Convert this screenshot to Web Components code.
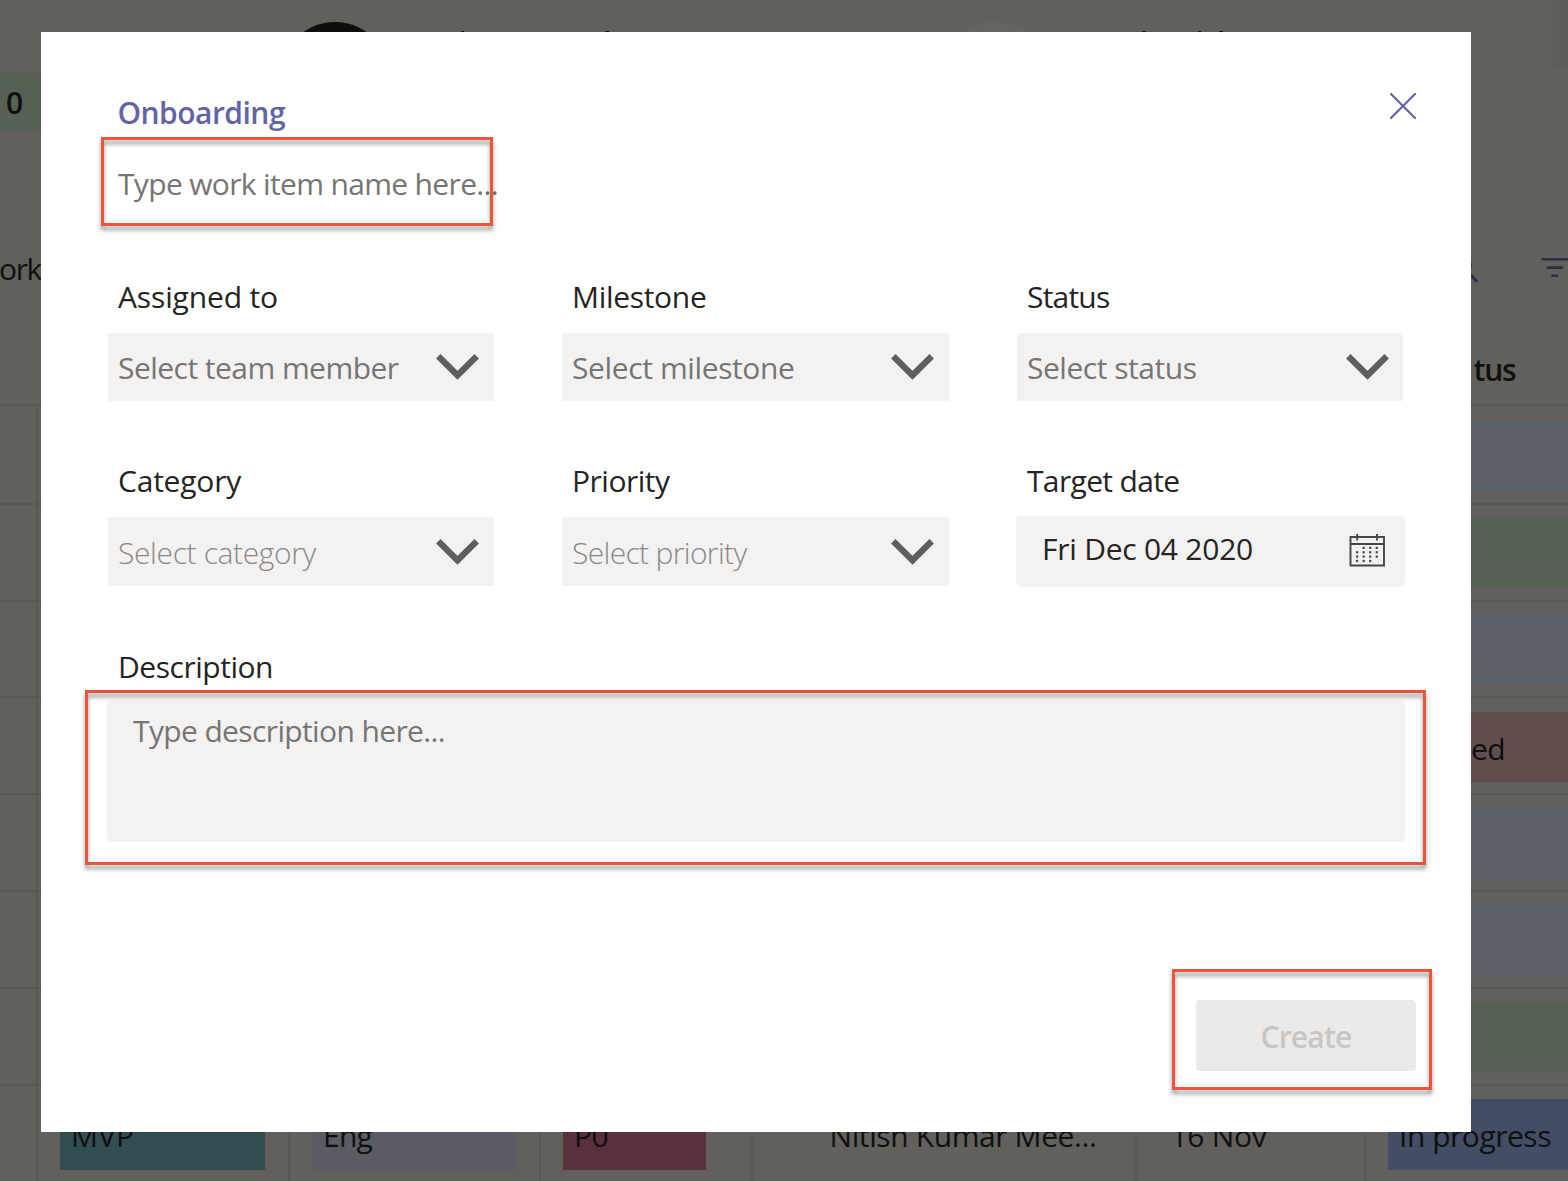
<!DOCTYPE html>
<html lang="en"><head><meta charset="utf-8"><title>Work items</title>
<style>
html,body{margin:0;width:1568px;height:1181px;overflow:hidden}
body{font-family:"Open Sans","Noto Sans",sans-serif;font-size:30px;line-height:40px;color:#252423;position:relative}
</style></head><body>
<work-board></work-board>
<work-dialog></work-dialog>
<script>
class Base extends HTMLElement{
  connectedCallback(){
    if(this.shadowRoot)return;
    this.attachShadow({mode:'open'}).innerHTML='<style>*{box-sizing:border-box}'+this.css()+'</style>'+this.html();
    this.ready&&this.ready();
  }
}
// Text run spaced to a given advance width
customElements.define('fit-text',class extends Base{
  css(){return ':host{display:inline-block;white-space:nowrap;flex:none}span{display:inline-block;white-space:pre}'}
  html(){return '<span><slot></slot></span>'}
  ready(){
    const w=+this.getAttribute('w'),s=this.shadowRoot.querySelector('span'),n=this.textContent.length;
    if(!w)return;
    const d=w-s.getBoundingClientRect().width;
    s.style.letterSpacing=(d/n)+'px';
  }
});
customElements.define('board-pill',class extends Base{
  css(){return `:host{display:flex;box-sizing:border-box;flex:none;height:70.5px;width:${this.getAttribute('w')}px;background:${this.getAttribute('c')};padding:17px 0 0 ${this.getAttribute('p')||11}px}`}
  html(){return '<slot></slot>'}
});
customElements.define('board-row',class extends Base{
  css(){return `:host{display:flex;height:96.9px;border-bottom:2px solid #5a5957;box-sizing:border-box}
  div{border-right:2px solid #5a5957;height:100%;padding-top:13.200px;flex:none;display:flex}
  .a{width:38px}.b{width:252px;padding-left:22px}.c{width:251px;padding-left:22px}.d{width:211.5px;padding-left:22px}
  .e{width:384px;padding-left:77px}.f{width:229.5px;padding-left:34px}.g{width:202px;padding-left:22px;border:0}
  .e,.f{padding-top:30.200px}`}
  html(){return '<div class="a"></div><div class="b"><slot name="b"></slot></div><div class="c"><slot name="c"></slot></div><div class="d"><slot name="d"></slot></div><div class="e"><slot name="e"></slot></div><div class="f"><slot name="f"></slot></div><div class="g"><slot name="g"></slot></div>'}
});
customElements.define('work-board',class extends Base{
  css(){return `:host{display:block;width:1568px;height:1181px;background:#61605d;color:#10100f;overflow:hidden}
  .people{height:73px;display:flex;align-items:flex-start;overflow:hidden}
  .av{width:108px;height:108px;border-radius:50%;background:#0d0e10;margin:22px 0 0 281px;flex:none}
  .av.two{background:#646461;margin-left:332px}
  .tip{width:4px;height:1px;background:#151514;margin-top:31px;flex:none}
  .tip.dot{width:3px}
  .corner{width:15px;height:70px;background:#5e5d5a;border-radius:0 0 0 4px;margin-left:330px;flex:none}
  .count{width:50px;height:57px;background:#566053;padding:10px 0 0 6px;font-weight:600}
  .tools{height:130px;display:flex;padding-top:119px;align-items:flex-start}
  .tools svg{margin:4px 0 0 1420px;flex:none}
  .head{height:146px;padding:90px 0 0 1473.500px;font-weight:600;border-bottom:2px solid #5a5957}
  section{height:775px;padding-top:1.800px}`}
  html(){
    const blue='#5d6069',green='#566053',row=(c,t='')=>`<board-row><board-pill slot="g" w="200" p="83" c="${c}">${t}</board-pill></board-row>`;
    return `<div class="people"><div class="av"></div><div class="tip dot" style="margin-left:72px"></div><div class="tip" style="margin-left:141px"></div>
    <div class="av two"></div><div class="tip" style="margin-left:93px"></div><div class="tip dot" style="margin-left:52px"></div><div class="tip" style="margin-left:18px"></div><div class="corner"></div></div>
    <div class="count"><fit-text w="16">0</fit-text></div>
    <div class="tools"><fit-text w="42" style="margin-left:-1px">ork</fit-text><svg width="107" height="40" viewBox="1461 253 107 40" fill="none" stroke="#2c2c47" stroke-width="2.6" stroke-linecap="round"><circle cx="1461" cy="265.500" r="9.500"/><path d="M1468.500 272.500l8 8.500M1542.500 259.200h25.500M1547.500 267.600h14.500M1552.500 275.800h4.500"/></svg></div>
    <div class="head"><fit-text w="42">tus</fit-text></div>
    <section>${row(blue)}${row(green)}${row(blue)}${row('#614d4b','<fit-text w="34">ed</fit-text>')}${row(blue)}${row(blue)}${row(green)}
    <board-row><board-pill slot="b" w="205" c="#314f52"><fit-text w="63">MVP</fit-text></board-pill>
    <board-pill slot="c" w="205" c="#5b5b64"><fit-text w="49">Eng</fit-text></board-pill>
    <board-pill slot="d" w="143" c="#5a303d"><fit-text w="34">P0</fit-text></board-pill>
    <fit-text slot="e" w="267">Nitish Kumar Mee...</fit-text><fit-text slot="f" w="96">16 Nov</fit-text>
    <board-pill slot="g" w="200" c="#424d66" p="11"><fit-text w="152">In progress</fit-text></board-pill></board-row></section>`}
});
customElements.define('form-field',class extends Base{
  css(){return `:host{display:block}.l{height:57px;padding:1px 0 0 10px}`}
  html(){return `<div class="l"><fit-text w="${this.getAttribute('w')}">${this.getAttribute('label')}</fit-text></div><slot></slot>`}
});
customElements.define('select-box',class extends Base{
  css(){return `:host{display:flex;box-sizing:border-box;width:100%;height:68px;background:#f3f2f1;color:#767574;padding:15px 14px 0 10px;justify-content:space-between;align-items:flex-start}svg{margin-top:3px;flex:none}:host([light]){color:#8a8988;font-weight:300;height:69px;padding-top:16px}`}
  html(){return '<slot></slot><svg width="45" height="32" viewBox="435 351 45 32" fill="none" stroke="#605e5c" stroke-width="6.300"><path d="M438.300 356.200l19.200 19 19.200-19"/></svg>'}
});
customElements.define('date-box',class extends Base{
  css(){return ':host{display:flex;box-sizing:border-box;width:389px;height:71px;margin:-1px 0 0 -1px;background:#f3f2f1;border-radius:5px;padding:13px 19px 0 26px;justify-content:space-between;align-items:flex-start}svg{margin-top:4px;flex:none}'}
  html(){
    let d='';[[1,2,3],[0,1,2,3],[0,1,2,3],[0,1,2]].forEach((r,y)=>r.forEach(x=>d+=`<rect x="${7+x*6.55}" y="${13.8+y*4.35}" width="2.2" height="2.2"/>`));
    return `<slot></slot><svg width="37" height="35" viewBox="0 0 37 35" fill="#484644"><g fill="none" stroke="#484644" stroke-width="1.900"><path d="M1.500 4h33.500v28.500h-33.500zM1.500 11h33.500M8.200 1v6.500M28 1v6.500"/></g>${d}</svg>`}
});
// Red highlight frame laid over the dialog
customElements.define('call-out',class extends Base{
  css(){const [x,y,w,h]=this.getAttribute('box').split(',');return `:host{position:absolute;left:${x}px;top:${y}px;width:${w}px;height:${h}px;box-sizing:border-box;border:3px solid #eb553c;filter:drop-shadow(0 4px 2px rgba(0,0,0,.42));pointer-events:none}`}
  html(){return ''}
});
customElements.define('work-dialog',class extends Base{
  css(){return `:host{position:absolute;left:41px;top:32px;width:1430px;height:1100px;background:#fff;box-sizing:border-box;padding:60.500px 54px 0 67px}
  header{display:flex;justify-content:space-between;color:#6264a7;font-weight:600;padding-left:9.500px}
  header svg{margin-top:-1px}
  .name{color:#767574;padding:31px 0 0 10px;height:143.500px}
  .grid{display:grid;grid-template-columns:386px 387px 386px;column-gap:68px;row-gap:58px}
  .grid form-field{height:126px}
  .area{width:1298px;height:142px;margin:-3px 0 0 -1px;border-radius:5px;background:#f3f2f1;color:#767574;padding:10.500px 26px}
  .desc{margin-top:60px}
  .create{width:220px;height:71px;margin:158px 1px 0 auto;background:#ebeae8;color:#c8c6c4;border-radius:4px;font-weight:600;display:flex;justify-content:center;padding-top:17px}`}
  html(){return `<header><fit-text w="167.500">Onboarding</fit-text><svg width="28" height="28" viewBox="0 0 28 28" fill="none" stroke="#6264a7" stroke-width="2.200" stroke-linecap="round"><path d="M2 2l24 24M26 2L2 26"/></svg></header>
  <div class="name"><fit-text w="380">Type work item name here...</fit-text></div>
  <div class="grid">
  <form-field label="Assigned to" w="160"><select-box><fit-text w="280.500">Select team member</fit-text></select-box></form-field>
  <form-field label="Milestone" w="134.5"><select-box><fit-text w="222.500">Select milestone</fit-text></select-box></form-field>
  <form-field label="Status" w="82.5"><select-box style="padding-right:13px"><fit-text w="169.500">Select status</fit-text></select-box></form-field>
  <form-field label="Category" w="123"><select-box light><fit-text w="198">Select category</fit-text></select-box></form-field>
  <form-field label="Priority" w="97.5"><select-box light><fit-text w="174.500">Select priority</fit-text></select-box></form-field>
  <form-field label="Target date" w="152.5"><date-box><fit-text w="211">Fri Dec 04 2020</fit-text></date-box></form-field></div>
  <form-field class="desc" label="Description" w="155"><div class="area"><fit-text w="312">Type description here...</fit-text></div></form-field>
  <div class="create"><fit-text w="91">Create</fit-text></div>
  <call-out box="60,105,392,89"></call-out><call-out box="44,658,1341,175"></call-out><call-out box="1131,937,260,121"></call-out>`}
});
</script></body></html>
